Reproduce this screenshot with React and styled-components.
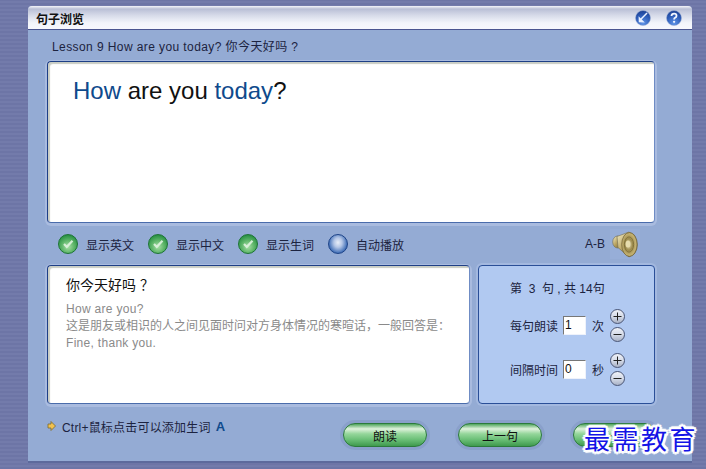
import React from "react";
import styled, { createGlobalStyle } from "styled-components";

const FONT = `"Liberation Sans", "Noto Sans CJK SC", sans-serif`;

const GlobalStyle = createGlobalStyle`
  html, body {
    margin: 0;
    padding: 0;
    width: 706px;
    height: 469px;
    overflow: hidden;
    background: repeating-linear-gradient(0deg, #6d75a6 0, #6d75a6 2px, #737bab 2px, #737bab 4px);
    font-family: ${FONT};
  }
`;

const Page = styled.div`
  position: relative;
  width: 706px;
  height: 469px;
  padding: 6px 14px 6px 28px;
  box-sizing: border-box;
`;

const Window = styled.div`
  height: 457px;
  background: #94abd4;
  border-radius: 4px 4px 0 0;
  border-bottom: 2px solid #5d6a9c;
  box-sizing: border-box;
  display: flex;
  flex-direction: column;
`;

const TitleBar = styled.div`
  height: 24px;
  flex: none;
  box-sizing: border-box;
  border-bottom: 1px solid #4a5590;
  border-radius: 4px 4px 0 0;
  background: linear-gradient(#f4f5fa 0, #b9bfd6 3px, #d5d9e8 9px, #f3f5fb 17px, #f7f8fd 100%);
  display: flex;
  align-items: center;
  padding: 0 10px 0 8px;
`;

const TitleText = styled.div`
  flex: 1;
  font-size: 12px;
  font-weight: 700;
  color: #111;
  padding-top: 1px;
`;

const TitleIcon = styled.svg`
  width: 16px;
  height: 16px;
  margin-left: 15px;
  display: block;
`;

const Content = styled.div`
  flex: 1;
  display: flex;
  flex-direction: column;
  padding: 0 37px 0 19px;
  min-height: 0;
`;

const LessonLine = styled.div`
  height: 31px;
  flex: none;
  display: flex;
  align-items: center;
  padding: 0 0 0 5px;
  font-size: 12px;
  color: #1c2340;
  letter-spacing: 0.41px;
`;

const Panel = styled.div`
  box-sizing: border-box;
  background: #fff;
  border: 1px solid #1e3f86;
  border-right-color: #6f8cc4;
  border-bottom-color: #4a6cab;
  border-radius: 4px;
  box-shadow: inset 2px 2px 1px #c9cdc4, 0 1px 0 2px #a9bbdf;
`;

const ReadingPanel = styled(Panel)`
  height: 162px;
  flex: none;
  padding: 14px 25px;
  font-size: 24px;
  line-height: 30px;
  color: #111;
`;

const Word = styled.span`
  color: ${(p) => (p.$known ? "#0f4a8c" : "#111")};
`;

const OptionRow = styled.div`
  height: 42px;
  flex: none;
  display: flex;
  align-items: center;
  padding: 0 17px 0 11px;
`;

const Option = styled.div`
  width: 90px;
  display: flex;
  align-items: center;
  gap: 8px;
  font-size: 12px;
  color: #1c2340;
`;

const Ball = styled.div`
  width: 20px;
  height: 20px;
  flex: none;
  box-sizing: border-box;
  border-radius: 50%;
  border: 1px solid ${(p) => (p.$on ? "#1c7433" : "#1e4488")};
  background: ${(p) =>
    p.$on
      ? "radial-gradient(circle at 50% 65%, #a9dfa8 0, #62b86c 40%, #1f8a3d 85%, #14702e 100%)"
      : "radial-gradient(ellipse at 50% 42%, #e8eef8 0, #b4c6e6 32%, #4a76bb 68%, #1e4488 100%)"};
  display: flex;
  align-items: center;
  justify-content: center;
`;

const Spacer = styled.div`
  flex: 1;
`;

const AbLabel = styled.div`
  font-size: 12px;
  color: #1c2340;
  margin-right: 5px;
`;

const SpeakerBox = styled.div`
  width: 30px;
  height: 30px;
  margin-right: -2px;
  flex: none;
  display: flex;
  align-items: center;
  justify-content: center;
  background: #97aed8;
`;

const SpeakerIcon = styled.svg`
  width: 26px;
  height: 27px;
  display: block;
`;

const LowerRow = styled.div`
  height: 139px;
  flex: none;
  display: flex;
  gap: 8px;
`;

const NotePanel = styled(Panel)`
  width: 423px;
  padding: 10px 18px;
`;

const NoteTitle = styled.div`
  font-size: 14px;
  line-height: 18px;
  color: #111;
  margin-bottom: 7px;
  white-space: pre;
`;

const NoteLine = styled.div`
  font-size: 12px;
  line-height: 17px;
  color: #8a8a8a;
  white-space: nowrap;
  letter-spacing: ${(p) => (p.$latin ? "0.3px" : "0")};
`;

const CountPanel = styled.div`
  width: 177px;
  box-sizing: border-box;
  background: #b1c9f1;
  border: 1px solid #2a4f98;
  border-radius: 4px;
  box-shadow: 0 0 0 2px #a3b8df;
  padding: 15px 0 0 31px;
  font-size: 12px;
  color: #1c2340;
`;

const CountLine = styled.div`
  height: 16px;
  line-height: 16px;
  margin-bottom: 10px;
  white-space: pre;
`;

const SettingRow = styled.div`
  height: 36px;
  display: flex;
  align-items: center;
  margin-bottom: 8px;
`;

const SettingLabel = styled.div`
  width: 53px;
  flex: none;
`;

const NumberInput = styled.input`
  width: 23px;
  height: 19px;
  box-sizing: border-box;
  border: 1px solid #eef2fb;
  border-top-color: #777;
  border-left-color: #777;
  background: #fff;
  padding: 0 1px;
  font: 12px ${FONT};
  color: #111;
  outline: none;
`;

const Unit = styled.div`
  width: 24px;
  text-align: center;
  flex: none;
`;

const Stepper = styled.div`
  display: flex;
  flex-direction: column;
  gap: 3px;
`;

const StepButton = styled.div`
  width: 15px;
  height: 15px;
  box-sizing: border-box;
  border-radius: 50%;
  border: 1px solid #4a5575;
  background: linear-gradient(#eef1f7 0, #d5dbe8 50%, #a9b2c6 100%);
  color: #222;
  display: flex;
  align-items: center;
  justify-content: center;
`;

const Footer = styled.div`
  flex: 1;
  display: flex;
  align-items: flex-start;
  padding: 12px 0 0 0;
`;

const Hint = styled.div`
  width: 296px;
  flex: none;
  display: flex;
  align-items: center;
  height: 20px;
  font-size: 12px;
  color: #1c2340;
  letter-spacing: 0.2px;
`;

const HintArrow = styled.svg`
  width: 9px;
  height: 10px;
  margin-right: 6px;
  display: block;
`;

const HintLetter = styled.span`
  color: #0f4a8c;
  font-size: 13px;
  font-weight: 700;
  margin-left: 5px;
`;

const ActionButton = styled.div`
  width: 84px;
  height: 24px;
  flex: none;
  margin: 7px 31px 0 0;
  box-sizing: border-box;
  border: 1px solid #2c7a3c;
  border-radius: 12px;
  box-shadow: 0 0 0 3px #8aa0cb;
  background: linear-gradient(#4fa55c 0, #dff2dc 22%, #94d69a 45%, #6cc078 70%, #3f9a4e 100%);
  display: flex;
  align-items: center;
  justify-content: center;
  font-size: 12px;
  color: #111;
`;

const Watermark = styled.div`
  position: absolute;
  left: 584px;
  top: 421px;
  font-family: "Noto Sans CJK SC", sans-serif;
  font-size: 26px;
  line-height: 34px;
  letter-spacing: 2.5px;
  font-weight: 400;
  white-space: nowrap;
  color: #1414e6;
  text-shadow: 2px 0 0 #fff, -2px 0 0 #fff, 0 2px 0 #fff, 0 -2px 0 #fff,
    2px 2px 0 #fff, -2px 2px 0 #fff, 2px -2px 0 #fff, -2px -2px 0 #fff,
    3px 0 1px #fff, -3px 0 1px #fff, 0 3px 1px #fff, 0 -3px 1px #fff;
`;

function RoundIcon({ id, children }) {
  return (
    <TitleIcon viewBox="0 0 17 17">
      <defs>
        <radialGradient id={id} cx="50%" cy="85%" r="85%">
          <stop offset="0" stopColor="#5f93e6" />
          <stop offset="0.6" stopColor="#2d5cb8" />
          <stop offset="1" stopColor="#1c3f92" />
        </radialGradient>
      </defs>
      <circle cx="8.5" cy="8.5" r="8" fill={`url(#${id})`} stroke="#9fb0d6" strokeWidth="0.6" />
      {children}
    </TitleIcon>
  );
}

function Check() {
  return (
    <svg width="12" height="10" viewBox="0 0 12 10">
      <path d="M2 5 L4.8 7.8 L10.5 1.8" fill="none" stroke="#dff2df" strokeOpacity="0.9" strokeWidth="2.2" />
    </svg>
  );
}

function Speaker() {
  return (
    <SpeakerBox>
      <SpeakerIcon viewBox="0 0 26 27">
        <defs>
          <linearGradient id="cone" x1="0" y1="0" x2="1" y2="1">
            <stop offset="0" stopColor="#f4edc6" />
            <stop offset="0.5" stopColor="#b7a15e" />
            <stop offset="1" stopColor="#6a5a2e" />
          </linearGradient>
          <radialGradient id="dish" cx="45%" cy="50%" r="60%">
            <stop offset="0" stopColor="#efe6bc" />
            <stop offset="0.4" stopColor="#9c8a4c" />
            <stop offset="0.75" stopColor="#c4b171" />
            <stop offset="1" stopColor="#8a7a43" />
          </radialGradient>
        </defs>
        <ellipse cx="5.5" cy="11" rx="4.8" ry="6" fill="url(#cone)" stroke="#6e6a52" strokeWidth="0.6" />
        <path d="M5 5.5 L17 1 Q25 6 25 14 Q25 22 17 26 L6 16.5 Z" fill="url(#cone)" stroke="#6e6a52" strokeWidth="0.6" />
        <ellipse cx="17.5" cy="13.5" rx="7.8" ry="12" fill="url(#dish)" stroke="#6b5d30" strokeWidth="0.7" />
        <ellipse cx="17" cy="13.5" rx="4.6" ry="7.6" fill="none" stroke="#786a36" strokeWidth="0.8" />
        <ellipse cx="16" cy="13" rx="2.4" ry="3.6" fill="#e6dcae" />
      </SpeakerIcon>
    </SpeakerBox>
  );
}

function Setting({ label, value, unit }) {
  return (
    <SettingRow>
      <SettingLabel>{label}</SettingLabel>
      <NumberInput defaultValue={value} />
      <Unit>{unit}</Unit>
      <Stepper>
        <StepButton>
          <svg width="9" height="9" viewBox="0 0 9 9">
            <path d="M0.5 4.5 H8.5 M4.5 0.5 V8.5" stroke="#222" strokeWidth="1" />
          </svg>
        </StepButton>
        <StepButton>
          <svg width="9" height="9" viewBox="0 0 9 9">
            <path d="M0.5 4.5 H8.5" stroke="#222" strokeWidth="1" />
          </svg>
        </StepButton>
      </Stepper>
    </SettingRow>
  );
}

export default function App() {
  return (
    <Page>
      <GlobalStyle />
      <Window>
        <TitleBar>
          <TitleText>句子浏览</TitleText>
          <RoundIcon id="backBall">
            <path d="M12.8 3.2 L6 10" fill="none" stroke="#e8f0ff" strokeWidth="1.6" />
            <path d="M3.8 6.6 L4 13 L10.4 13.2 Z" fill="#e8f0ff" />
          </RoundIcon>
          <RoundIcon id="helpBall">
            <path d="M5.8 6.4 Q6 3.8 8.6 3.8 Q11.2 3.8 11.2 6 Q11.2 7.4 9.6 8.2 Q8.6 8.8 8.6 10" fill="none" stroke="#f2f6ff" strokeWidth="1.9" />
            <circle cx="8.6" cy="12.6" r="1.2" fill="#f2f6ff" />
          </RoundIcon>
        </TitleBar>
        <Content>
          <LessonLine>Lesson 9 How are you today? 你今天好吗 ?</LessonLine>
          <ReadingPanel>
            <Word $known>How</Word> are you <Word $known>today</Word>?
          </ReadingPanel>
          <OptionRow>
            <Option><Ball $on><Check /></Ball>显示英文</Option>
            <Option><Ball $on><Check /></Ball>显示中文</Option>
            <Option><Ball $on><Check /></Ball>显示生词</Option>
            <Option><Ball />自动播放</Option>
            <Spacer />
            <AbLabel>A-B</AbLabel>
            <Speaker />
          </OptionRow>
          <LowerRow>
            <NotePanel>
              <NoteTitle>你今天好吗 ？</NoteTitle>
              <NoteLine $latin>How are you?</NoteLine>
              <NoteLine>这是朋友或相识的人之间见面时问对方身体情况的寒暄话，一般回答是：</NoteLine>
              <NoteLine $latin>Fine, thank you.</NoteLine>
            </NotePanel>
            <CountPanel>
              <CountLine>第  3  句 , 共 14句</CountLine>
              <Setting label="每句朗读" value="1" unit="次" />
              <Setting label="间隔时间" value="0" unit="秒" />
            </CountPanel>
          </LowerRow>
          <Footer>
            <Hint>
              <HintArrow viewBox="0 0 9 10">
                <path d="M1 3 H4 V0.5 L8.5 5 L4 9.5 V7 H1 Z" fill="#f2c14e" stroke="#7a6a30" strokeWidth="0.8" />
              </HintArrow>
              Ctrl+鼠标点击可以添加生词<HintLetter>A</HintLetter>
            </Hint>
            <ActionButton>朗读</ActionButton>
            <ActionButton>上一句</ActionButton>
            <ActionButton>下一句</ActionButton>
          </Footer>
        </Content>
      </Window>
      <Watermark>最需教育</Watermark>
    </Page>
  );
}
